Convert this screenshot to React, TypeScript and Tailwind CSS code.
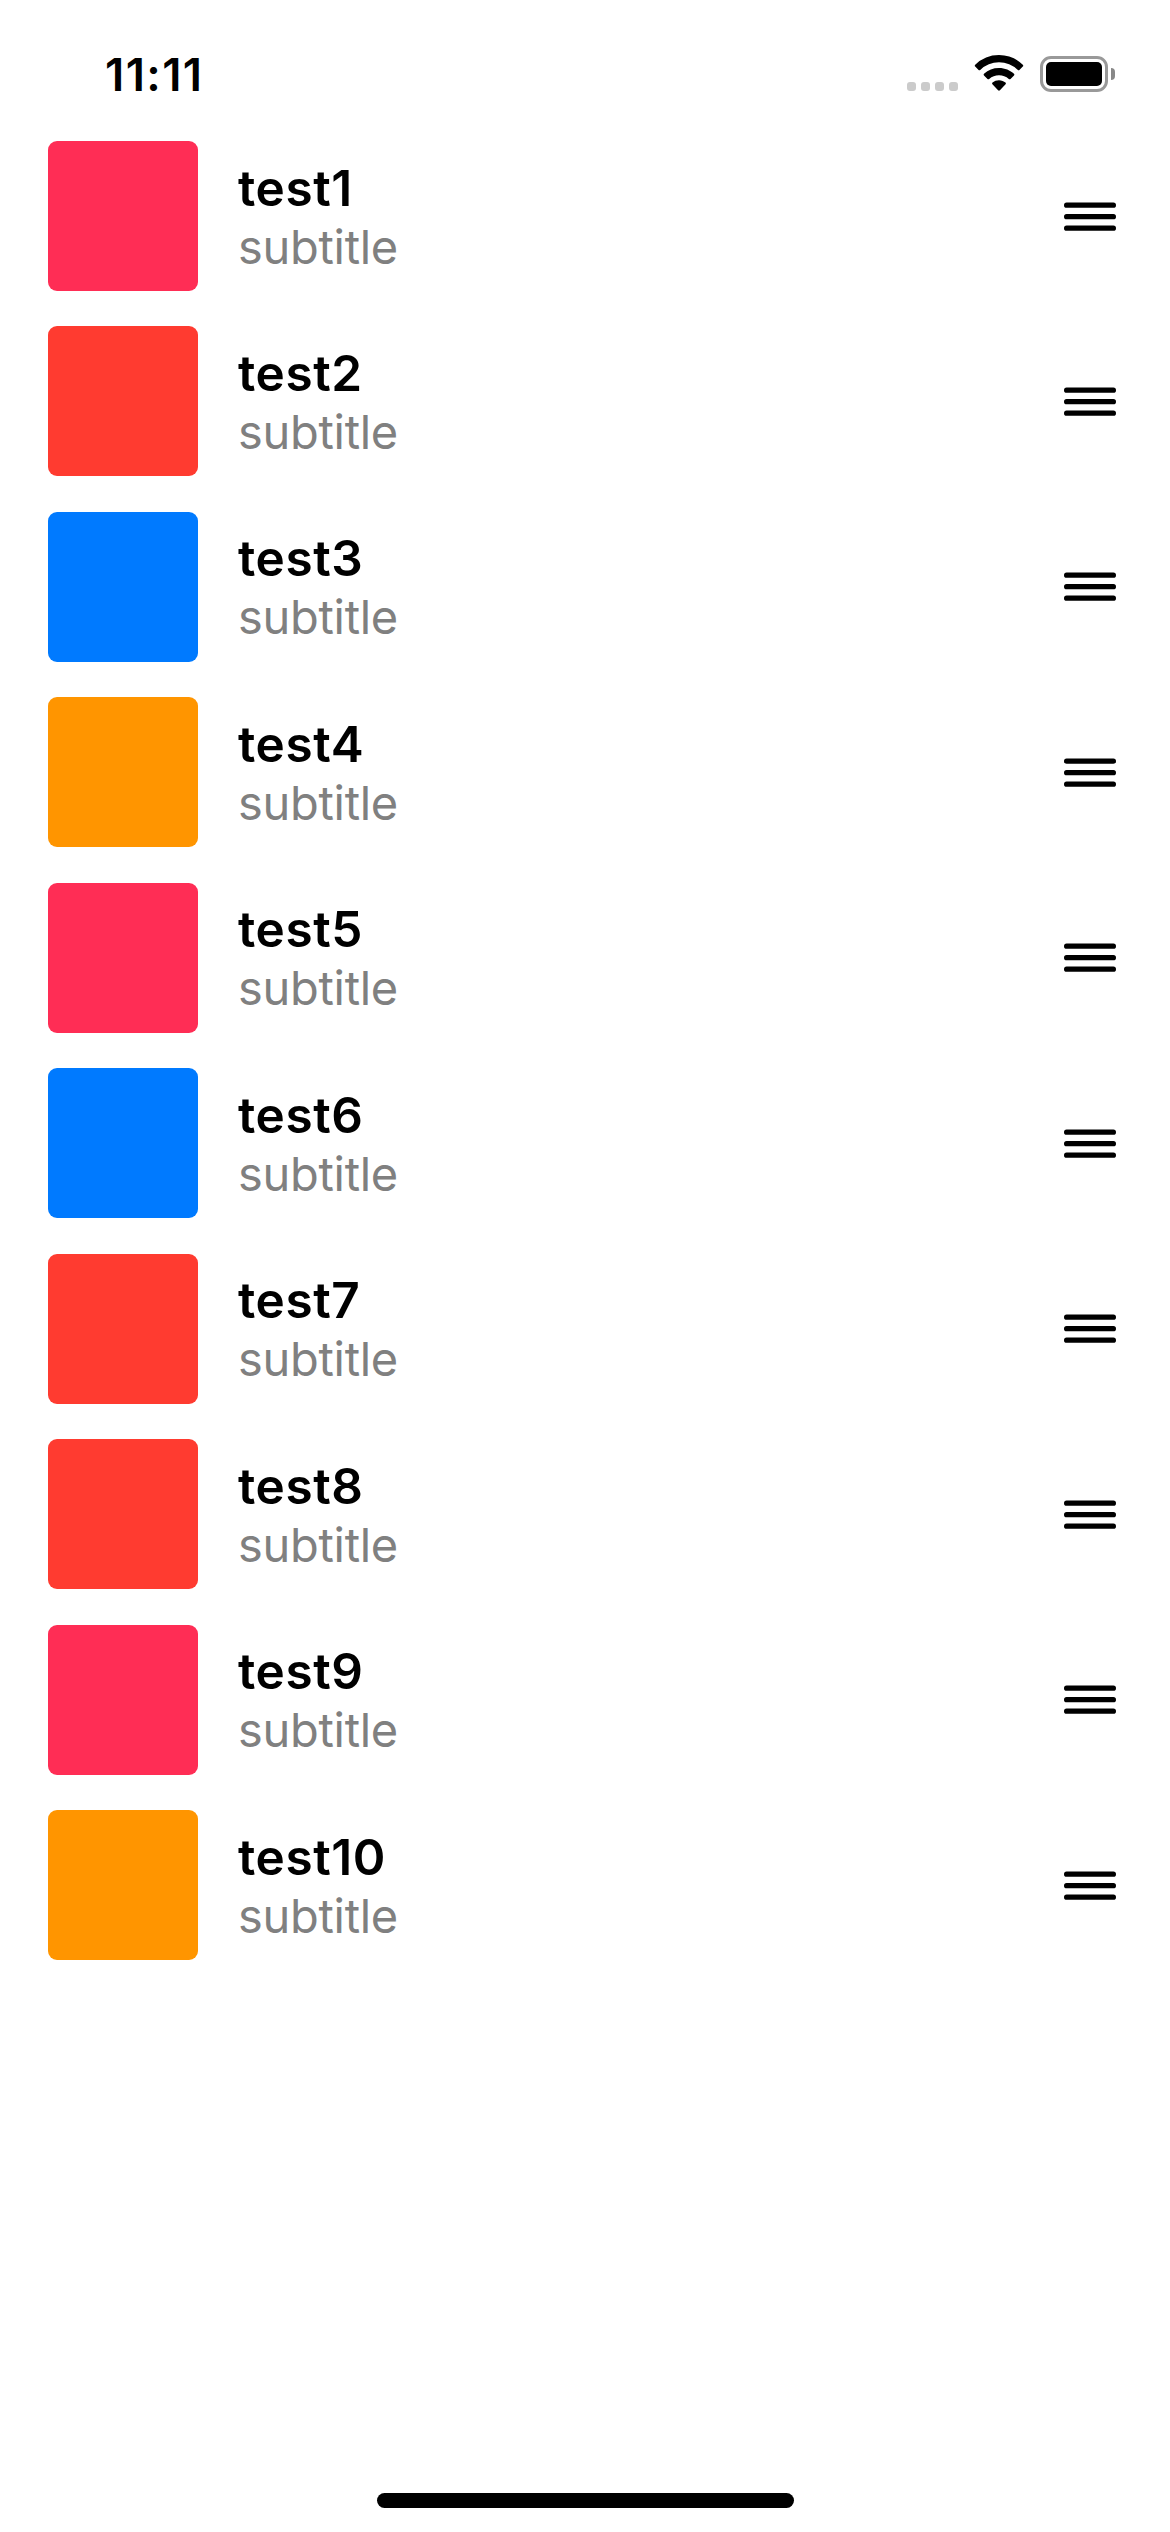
const rows = [
  { title: "test1", color: "bg-[#ff2d55]" },
  { title: "test2", color: "bg-[#ff3b30]" },
  { title: "test3", color: "bg-[#007aff]" },
  { title: "test4", color: "bg-[#ff9500]" },
  { title: "test5", color: "bg-[#ff2d55]" },
  { title: "test6", color: "bg-[#007aff]" },
  { title: "test7", color: "bg-[#ff3b30]" },
  { title: "test8", color: "bg-[#ff3b30]" },
  { title: "test9", color: "bg-[#ff2d55]" },
  { title: "test10", color: "bg-[#ff9500]" },
];

function StatusBar() {
  return (
    <header className="flex h-[141px] shrink-0 items-start pr-[55px] pl-[105px]">
      <span className="mt-[44px] text-[45.5px] leading-[61px] font-semibold tracking-[1.4px]">11:11</span>
      <div className="mt-[82px] ml-auto flex gap-[5px]">
        {[0, 1, 2, 3].map((dot) => (
          <span key={dot} className="size-[9px] rounded-[3px] bg-[#cbcbcb]" />
        ))}
      </div>
      <svg className="mt-[55px] ml-[16px] h-[37px] w-[50px]" viewBox="0 0 50 37">
        <path d="M25 0C34.6 0 43 3.8 48.8 9.8Q49.7 10.7 48.8 11.6L45.4 15Q44.6 15.7 43.8 14.9A27 27 0 0 0 6.2 14.9Q5.4 15.7 4.6 15L1.2 11.6Q.3 10.7 1.2 9.8A33.8 33.8 0 0 1 25 0Z" />
        <path d="M25 12.9C30.9 12.9 36.2 15.2 40 18.8Q40.9 19.7 40 20.6L36.5 24Q35.7 24.7 34.8 24A14.8 14.8 0 0 0 15.2 24Q14.3 24.7 13.5 24L10 20.6Q9.1 19.7 10 18.8A21.8 21.8 0 0 1 25 12.9Z" />
        <path d="M25 25.2C27.6 25.2 29.8 26.1 31.5 27.6Q32.4 28.4 31.6 29.2L25.9 35.3Q25 36.2 24.1 35.3L18.4 29.2Q17.6 28.4 18.5 27.6A9.8 9.8 0 0 1 25 25.2Z" />
      </svg>
      <div className="mt-[56px] ml-[16px] flex items-center gap-[3px]">
        <div className="h-[36px] w-[68px] rounded-[11px] border-3 border-[#999] p-[3px]">
          <div className="h-full rounded-[5px] bg-black" />
        </div>
        <div className="h-[12px] w-[4px] rounded-r-full bg-[#888]" />
      </div>
    </header>
  );
}

function DragHandle() {
  return (
    <svg className="mb-[0.9px] ml-auto h-[30px] w-[52px]" viewBox="0 0 52 30">
      <path d="M2.6 4.2H49.4M2.6 15.7H49.4M2.6 27.2H49.4" stroke="black" strokeWidth="5.2" strokeLinecap="round" />
    </svg>
  );
}

export default function App() {
  return (
    <div className="flex h-[2532px] w-[1170px] flex-col overflow-hidden bg-white font-['Inter',sans-serif] text-black">
      <StatusBar />
      <ul className="flex flex-col gap-[35.455px] pr-[54px] pl-[48px]">
        {rows.map((row) => (
          <li key={row.title} className="flex h-[150px] items-center">
            <div className={`size-[150px] rounded-[9px] ${row.color}`} />
            <div className="ml-[40px] flex flex-col pt-[1.1px]">
              <span className="text-[49.5px] leading-[60px] font-semibold tracking-[0.6px]">{row.title}</span>
              <span className="text-[47px] leading-[58px] tracking-[-0.3px] text-[#808080]">subtitle</span>
            </div>
            <DragHandle />
          </li>
        ))}
      </ul>
      <div className="mx-auto mt-auto mb-[24px] h-[15px] w-[417px] rounded-full bg-black" />
    </div>
  );
}
